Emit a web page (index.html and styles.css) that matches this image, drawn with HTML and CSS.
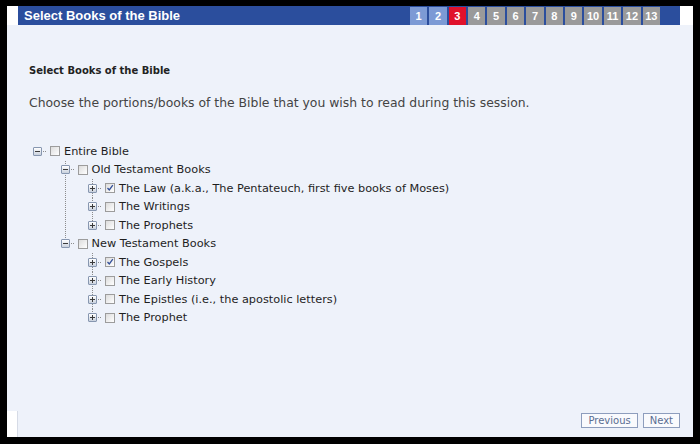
FILE: index.html
```html
<!DOCTYPE html>
<html lang="en">
<head>
  <meta charset="UTF-8" />
  <title>Select Books of the Bible</title>
  <link rel="stylesheet" href="styles.css">
</head>
<body>
  <div class="window">
    <header class="header">
      <div class="header-bar">
        <h1>Select Books of the Bible</h1>
        <ol class="steps">
          <li class="done">1</li>
          <li class="done">2</li>
          <li class="current">3</li>
          <li>4</li>
          <li>5</li>
          <li>6</li>
          <li>7</li>
          <li>8</li>
          <li>9</li>
          <li>10</li>
          <li>11</li>
          <li>12</li>
          <li>13</li>
        </ol>
      </div>
    </header>

    <main class="content">
      <h2>Select Books of the Bible</h2>
      <p class="intro">Choose the portions/books of the Bible that you wish to read during this session.</p>

      <ul class="tree">
        <li>
          <div class="row"><span class="exp open"></span><span class="dash"></span><span class="cb"></span>Entire Bible</div>
          <ul class="children">
            <li>
              <div class="row"><span class="exp open"></span><span class="dash"></span><span class="cb"></span>Old Testament Books</div>
              <ul class="children">
                <li><div class="row"><span class="exp"></span><span class="dash"></span><span class="cb checked"></span>The Law (a.k.a., The Pentateuch, first five books of Moses)</div></li>
                <li><div class="row"><span class="exp"></span><span class="dash"></span><span class="cb"></span>The Writings</div></li>
                <li><div class="row"><span class="exp"></span><span class="dash"></span><span class="cb"></span>The Prophets</div></li>
              </ul>
            </li>
            <li>
              <div class="row"><span class="exp open"></span><span class="dash"></span><span class="cb"></span>New Testament Books</div>
              <ul class="children">
                <li><div class="row"><span class="exp"></span><span class="dash"></span><span class="cb checked"></span>The Gospels</div></li>
                <li><div class="row"><span class="exp"></span><span class="dash"></span><span class="cb"></span>The Early History</div></li>
                <li><div class="row"><span class="exp"></span><span class="dash"></span><span class="cb"></span>The Epistles (i.e., the apostolic letters)</div></li>
                <li><div class="row"><span class="exp"></span><span class="dash"></span><span class="cb"></span>The Prophet</div></li>
              </ul>
            </li>
          </ul>
        </li>
      </ul>
    </main>

    <footer class="footer">
      <div class="footer-side"></div>
      <div class="buttons">
        <button class="btn">Previous</button>
        <button class="btn">Next</button>
      </div>
    </footer>
  </div>
</body>
</html>
```

FILE: styles.css
```css
:root {
  --header-blue: #2b4e9d;
  --page-bg: #eef2fa;
  --line: #8c8c8c;
}

html, body {
  margin: 0;
  padding: 0;
  height: 444px;
  background: #000;
  overflow: hidden;
}

.window {
  margin: 6px 7px 0 7px;
  height: 431px;
  background: var(--page-bg);
  display: flex;
  flex-direction: column;
  font-family: 'DejaVu Sans', Verdana, sans-serif;
}

/* header bar with step tabs */
.header {
  height: 19px;
  background: #fff;
  display: flex;
}

.header-bar {
  flex: 1;
  margin: 0 13px 0 11px;
  background: var(--header-blue);
  display: flex;
  align-items: stretch;
}

.header-bar h1 {
  margin: 0;
  padding-left: 6px;
  font: bold 13px/19px 'Liberation Sans', Arial, sans-serif;
  color: #fff;
}

.steps {
  list-style: none;
  margin: 0 20px 0 auto;
  padding: 1px 0 0 0;
  display: flex;
  gap: 2px;
}

.steps li {
  width: 17.4px;
  background: #9a9a9a;
  color: #fff;
  text-align: center;
  font: bold 11px/18px 'Liberation Sans', Arial, sans-serif;
}

.steps li.done {
  background: #7c9ad5;
}

.steps li.current {
  background: #e0112b;
}

/* main content */
.content {
  flex: 1;
  padding: 0 22px;
}

.content h2 {
  margin: 39px 0 0 0;
  font-size: 10px;
  line-height: 14px;
  font-weight: bold;
  color: #222;
}

.intro {
  margin: 16px 0 0 0;
  font-size: 12.4px;
  line-height: 18px;
  color: #444;
}

/* tree view */
.tree, .children {
  list-style: none;
  margin: 0;
  padding: 0;
}

.tree {
  margin-top: 30px;
  padding-left: 4px;
  font-size: 11.3px;
  color: #1e1e1e;
}

.children {
  padding-left: 27.5px;
}

.children > li {
  background: repeating-linear-gradient(to bottom, var(--line) 0 1px, transparent 1px 2px) 4px 0 / 1px 100% no-repeat;
}

.children > li:last-child {
  background-size: 1px 9px;
}

.row {
  height: 18.5px;
  display: flex;
  align-items: center;
  white-space: nowrap;
}

.exp {
  width: 9px;
  height: 9px;
  box-sizing: border-box;
  border: 1px solid #8797b0;
  border-radius: 1px;
  background:
    linear-gradient(#3a3a3a, #3a3a3a) center / 5px 1px no-repeat,
    linear-gradient(#3a3a3a, #3a3a3a) center / 1px 5px no-repeat,
    linear-gradient(#ffffff, #c9d1dd);
}

.exp.open {
  background:
    linear-gradient(#3a3a3a, #3a3a3a) center / 5px 1px no-repeat,
    linear-gradient(#ffffff, #c9d1dd);
}

.dash {
  width: 3px;
  margin: 0 4px 0 1px;
  border-top: 1px dotted var(--line);
}

.cb {
  width: 10px;
  height: 10px;
  box-sizing: border-box;
  margin-right: 4px;
  border: 1px solid #9c9c9c;
  background: linear-gradient(135deg, #dcdcdc, #ffffff);
}

.cb.checked {
  background:
    url("data:image/svg+xml;utf8,<svg xmlns='http://www.w3.org/2000/svg' width='8' height='8'><path d='M1.5 4 L3.3 6 L6.8 1.2' fill='none' stroke='%23324f99' stroke-width='1.3'/></svg>") center / 8px 8px no-repeat,
    linear-gradient(135deg, #dcdcdc, #ffffff);
}

/* footer with nav buttons */
.footer {
  height: 26px;
  display: flex;
}

.footer-side {
  width: 10px;
  background: #fff;
  border-right: 1px solid #d6dbe6;
}

.buttons {
  margin-left: auto;
  margin-right: 13px;
  padding-top: 2px;
  display: flex;
  align-items: flex-start;
  gap: 5px;
}

.btn {
  height: 15px;
  padding: 0 6px;
  background: #f9fafd;
  border: 1px solid #8d9dbd;
  font-family: 'DejaVu Sans', Verdana, sans-serif;
  font-size: 10px;
  line-height: 13px;
  color: #5a6d92;
  cursor: pointer;
}
```
